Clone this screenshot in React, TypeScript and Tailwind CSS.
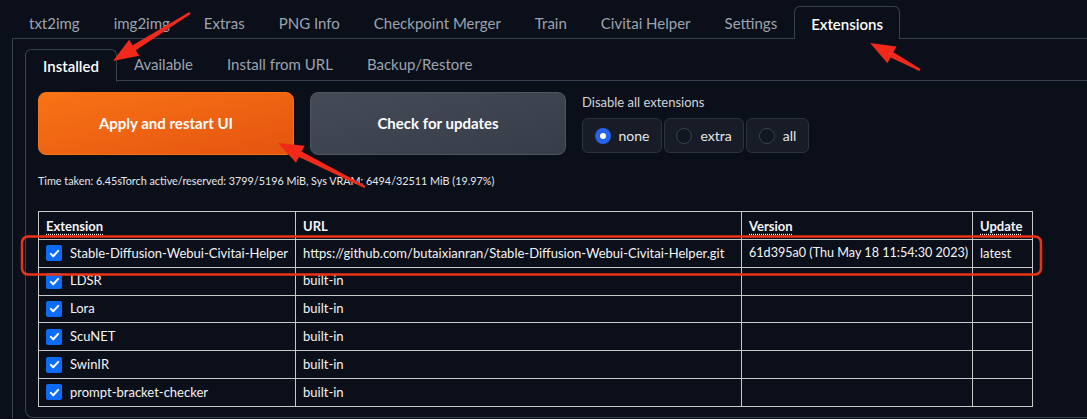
import React from "react";

const topTabs = [
  "txt2img",
  "img2img",
  "Extras",
  "PNG Info",
  "Checkpoint Merger",
  "Train",
  "Civitai Helper",
  "Settings",
];

const innerTabs = ["Available", "Install from URL", "Backup/Restore"];

const rows: { name: string; url: string; version: string; update: string }[] = [
  {
    name: "Stable-Diffusion-Webui-Civitai-Helper",
    url: "https://github.com/butaixianran/Stable-Diffusion-Webui-Civitai-Helper.git",
    version: "61d395a0 (Thu May 18 11:54:30 2023)",
    update: "latest",
  },
  { name: "LDSR", url: "built-in", version: "", update: "" },
  { name: "Lora", url: "built-in", version: "", update: "" },
  { name: "ScuNET", url: "built-in", version: "", update: "" },
  { name: "SwinIR", url: "built-in", version: "", update: "" },
  { name: "prompt-bracket-checker", url: "built-in", version: "", update: "" },
];

function Checkbox() {
  return (
    <span className="flex h-[16px] w-[16px] shrink-0 items-center justify-center rounded-[2px] bg-[#0b6cf5]">
      <svg width="11" height="11" viewBox="0 0 12 12" fill="none">
        <path
          d="M2 6.4l2.6 2.6L10 3.2"
          stroke="white"
          strokeWidth="2.2"
          strokeLinecap="round"
          strokeLinejoin="round"
        />
      </svg>
    </span>
  );
}

function Radio({ label, checked }: { label: string; checked?: boolean }) {
  return (
    <div className="flex h-[35px] items-center gap-[8px] rounded-[6px] border border-[#2b3240] bg-[#171c26] px-[11.5px] text-[14px] text-[#e5e7eb]">
      {checked ? (
        <span className="flex h-[16px] w-[16px] items-center justify-center rounded-full bg-[#2563eb]">
          <span className="h-[6px] w-[6px] rounded-full bg-white" />
        </span>
      ) : (
        <span className="h-[16px] w-[16px] rounded-full border border-[#374151] bg-[#111620]" />
      )}
      <span>{label}</span>
    </div>
  );
}

function arrow(x1: number, y1: number, x2: number, y2: number) {
  const dx = x2 - x1;
  const dy = y2 - y1;
  const len = Math.hypot(dx, dy);
  const ux = dx / len;
  const uy = dy / len;
  const px = -uy;
  const py = ux;
  const headLen = 25;
  const bx = x2 - ux * headLen;
  const by = y2 - uy * headLen;
  const pts: [number, number][] = [
    [x1 + px * 1.2, y1 + py * 1.2],
    [bx + px * 3, by + py * 3],
    [bx + px * 9.5, by + py * 9.5],
    [x2, y2],
    [bx - px * 9.5, by - py * 9.5],
    [bx - px * 3, by - py * 3],
    [x1 - px * 1.2, y1 - py * 1.2],
  ];
  return pts.map((p) => p.join(",")).join(" ");
}

export default function App() {
  return (
    <div
      className="relative h-[419px] w-[1087px] overflow-hidden bg-[#0b0f19] text-[#e5e7eb]"
      style={{ fontFamily: '"Lato", "Noto Sans", sans-serif' }}
    >
      {/* top tabs */}
      <div className="flex h-[38px] items-end pl-[12px] pt-[6px]">
        {topTabs.map((t) => (
          <div
            key={t}
            className="flex h-[32px] items-center border border-transparent px-[16px] pt-[3px] text-[15px] text-[#9ca3af]"
          >
            {t}
          </div>
        ))}
        <div className="-mb-px flex h-[33px] items-center rounded-t-[6px] border border-b-0 border-[#374151] bg-[#0b0f19] px-[16px] pt-[3px] text-[15px] font-semibold text-white">
          Extensions
        </div>
      </div>

      {/* outer panel */}
      <div className="ml-[12px] w-[1200px] border-l border-t border-[#374151] pl-[12px] pt-[10px]">
        {/* inner tabs */}
        <div className="flex h-[32px] items-end">
          <div className="-mb-px flex h-[33px] items-center rounded-t-[6px] border border-b-0 border-[#374151] bg-[#0b0f19] px-[17px] text-[15px] font-semibold text-white">
            Installed
          </div>
          <div className="flex h-[32px] flex-1 items-center border-b border-[#374151]">
            {innerTabs.map((t) => (
              <div key={t} className="px-[17px] text-[15px] text-[#9ca3af]">
                {t}
              </div>
            ))}
          </div>
        </div>

        {/* inner panel */}
        <div className="rounded-bl-[8px] border-b border-l border-[#374151] pb-[10px] pl-[12px] pt-[11px]">
          <div className="flex items-start">
            <button className="flex h-[63px] w-[256px] items-center justify-center rounded-[8px] border border-[#f97316] bg-gradient-to-br from-[#f97316] to-[#e4540f] text-[15px] font-bold text-white">
              Apply and restart UI
            </button>
            <button className="ml-[16px] flex h-[63px] w-[256px] items-center justify-center rounded-[8px] border border-[#4b5563] bg-gradient-to-br from-[#444b57] to-[#373d48] text-[15px] font-bold text-white">
              Check for updates
            </button>
            <div className="ml-[16px] flex flex-col gap-[8px]">
              <div className="pt-[2px] text-[13px] leading-[16px] text-[#d1d5db]">
                Disable all extensions
              </div>
              <div className="flex gap-[2px]">
                <Radio label="none" checked />
                <Radio label="extra" />
                <Radio label="all" />
              </div>
            </div>
          </div>

          <div className="mt-[19px] text-[10.8px] leading-[14px] text-[#e5e7eb]">
            Time taken: 6.45sTorch active/reserved: 3799/5196 MiB, Sys VRAM: 6494/32511 MiB (19.97%)
          </div>

          <table className="mt-[23px] w-[994px] table-fixed border-collapse text-[13px] text-[#f3f4f6]">
            <colgroup>
              <col className="w-[257px]" />
              <col className="w-[446px]" />
              <col className="w-[231px]" />
              <col className="w-[60px]" />
            </colgroup>
            <thead>
              <tr className="h-[28px]">
                {["Extension", "URL", "Version", "Update"].map((h) => (
                  <th
                    key={h}
                    className="border border-[#c8c8c8] px-[7px] pt-[3px] text-left font-bold"
                  >
                    {h === "URL" ? (
                      h
                    ) : (
                      <span className="underline decoration-dotted underline-offset-[3px]">
                        {h}
                      </span>
                    )}
                  </th>
                ))}
              </tr>
            </thead>
            <tbody>
              {rows.map((r) => (
                <tr key={r.name} className="h-[27.8px]">
                  <td className="border border-[#c8c8c8] px-[7px]">
                    <div className="flex items-center gap-[8px] whitespace-nowrap">
                      <Checkbox />
                      {r.name}
                    </div>
                  </td>
                  <td className="whitespace-nowrap border border-[#c8c8c8] px-[7px]">{r.url}</td>
                  <td className="whitespace-nowrap border border-[#c8c8c8] px-[7px] text-[12.6px]">
                    {r.version}
                  </td>
                  <td className="whitespace-nowrap border border-[#c8c8c8] px-[7px]">{r.update}</td>
                </tr>
              ))}
            </tbody>
          </table>
        </div>
      </div>

      {/* annotations */}
      <svg className="pointer-events-none absolute inset-0" width="1087" height="419">
        <rect
          x="22"
          y="236.5"
          width="1019"
          height="38"
          rx="6"
          fill="none"
          stroke="#ec3318"
          strokeWidth="2.5"
        />
        <polygon points={arrow(190, 13, 113, 61)} fill="#f0291a" />
        <polygon points={arrow(920, 70, 870, 43)} fill="#f0291a" />
        <polygon points={arrow(365, 187, 278, 143)} fill="#f0291a" />
      </svg>
    </div>
  );
}
